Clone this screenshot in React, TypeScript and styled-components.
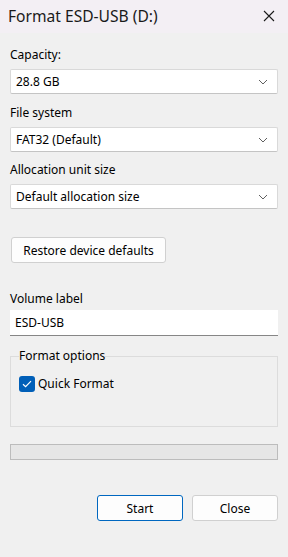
import styled, { createGlobalStyle } from 'styled-components';

const GlobalStyle = createGlobalStyle`
  html, body {
    margin: 0;
    padding: 0;
    background: #f0f0f0;
  }
  body {
    font-family: 'Noto Sans', 'Open Sans', sans-serif;
    color: #000;
  }
`;

const Chevron = () => (
  <svg width="10" height="6" viewBox="0 0 10 6" fill="none">
    <path d="M1 1l4 4 4-4" stroke="#606060" strokeWidth="1" />
  </svg>
);

const ComboBox = ({ value }: { value: string }) => (
  <Combo>
    <span>{value}</span>
    <Chevron />
  </Combo>
);

const App = () => {
  return (
    <Window>
      <GlobalStyle />
      <TitleBar>
        <Title>Format ESD-USB (D:)</Title>
        <CloseIcon width="12" height="12" viewBox="0 0 12 12">
          <path d="M1 1l10 10M11 1L1 11" stroke="#1a1a1a" strokeWidth="1.1" />
        </CloseIcon>
      </TitleBar>
      <Body>
        <Label>Capacity:</Label>
        <ComboBox value="28.8 GB" />
        <Label $top={11}>File system</Label>
        <ComboBox value="FAT32 (Default)" />
        <Label $top={10}>Allocation unit size</Label>
        <ComboBox value="Default allocation size" />

        <RestoreButton>Restore device defaults</RestoreButton>

        <Label $top={28} $gap={3}>Volume label</Label>
        <TextInput>ESD-USB</TextInput>

        <GroupBox>
          <Legend>Format options</Legend>
          <CheckRow>
            <CheckBox>
              <svg width="10" height="8" viewBox="0 0 10 8" fill="none">
                <path d="M1 4.2l2.6 2.4L9 1.2" stroke="#fff" strokeWidth="1.2" />
              </svg>
            </CheckBox>
            Quick Format
          </CheckRow>
        </GroupBox>

        <Progress />

        <ButtonRow>
          <DialogButton $primary>Start</DialogButton>
          <DialogButton>Close</DialogButton>
        </ButtonRow>
      </Body>
    </Window>
  );
};

export default App;

const Window = styled.div`
  width: 288px;
  height: 557px;
  background: #f0f0f0;
  display: flex;
  flex-direction: column;
`;

const TitleBar = styled.div`
  height: 33px;
  background: #f3eff4;
  display: flex;
  align-items: center;
  justify-content: space-between;
  padding: 0 13px 0 8px;
  box-sizing: border-box;
`;

const Title = styled.div`
  font-size: 15.6px;
  line-height: 20px;
  color: #1a1a1a;
  margin-top: -1px;
`;

const CloseIcon = styled.svg`
  margin-top: -2px;
`;

const Body = styled.div`
  display: flex;
  flex-direction: column;
  padding: 14px 10px 0 10px;
  font-size: 12px;
`;

const Label = styled.div<{ $top?: number; $gap?: number }>`
  line-height: 16px;
  margin-top: ${p => p.$top ?? 0}px;
  margin-bottom: ${p => p.$gap ?? 6}px;
  color: #000;
`;

const Combo = styled.div`
  height: 25px;
  box-sizing: border-box;
  background: #fff;
  border: 1px solid #d9d9d9;
  border-bottom-color: #c4c4c4;
  border-radius: 2px;
  display: flex;
  align-items: center;
  justify-content: space-between;
  padding: 0 9px 0 5px;
`;

const RestoreButton = styled.div`
  margin-top: 28px;
  margin-left: 1px;
  width: 155px;
  height: 26px;
  box-sizing: border-box;
  background: #fdfdfd;
  border: 1px solid #d0d0d0;
  border-radius: 3px;
  display: flex;
  align-items: center;
  justify-content: center;
`;

const TextInput = styled.div`
  height: 26px;
  box-sizing: border-box;
  background: #fff;
  border-bottom: 1px solid #868686;
  display: flex;
  align-items: center;
  padding-left: 5px;
`;

const GroupBox = styled.fieldset`
  margin: 12px 0 0 0;
  border: 1px solid #dcdcdc;
  padding: 12px 8px 34px 8px;
  min-width: 0;
`;

const Legend = styled.legend`
  padding: 0;
  line-height: 16px;
`;

const CheckRow = styled.div`
  display: flex;
  align-items: center;
  gap: 3px;
  line-height: 16px;
`;

const CheckBox = styled.div`
  width: 16px;
  height: 16px;
  border-radius: 3px;
  background: #005fb8;
  display: flex;
  align-items: center;
  justify-content: center;
`;

const Progress = styled.div`
  margin-top: 17px;
  height: 16px;
  box-sizing: border-box;
  background: #e6e6e6;
  border: 1px solid #bcbcbc;
`;

const ButtonRow = styled.div`
  margin-top: 35px;
  display: flex;
  justify-content: flex-end;
  gap: 9px;
`;

const DialogButton = styled.div<{ $primary?: boolean }>`
  width: 86px;
  height: 26px;
  box-sizing: border-box;
  background: #fdfdfd;
  border: 1px solid ${p => (p.$primary ? '#0067c0' : '#d0d0d0')};
  border-radius: 3px;
  display: flex;
  align-items: center;
  justify-content: center;
`;
